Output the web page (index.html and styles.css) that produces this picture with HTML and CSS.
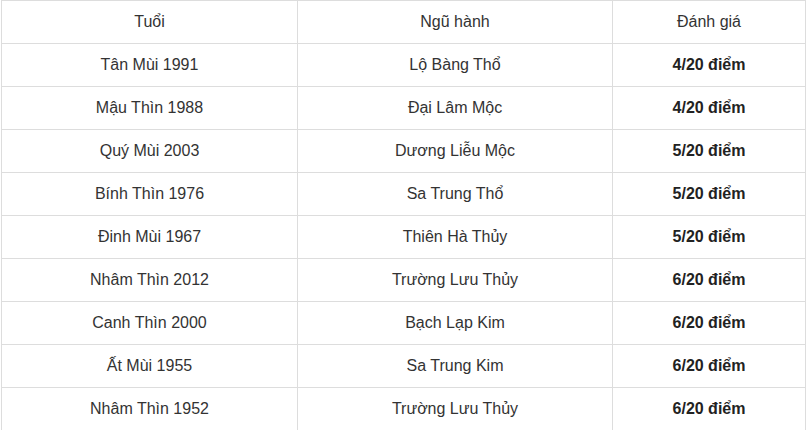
FILE: index.html
```html
<!DOCTYPE html>
<html lang="vi">
<head>
<meta charset="utf-8">
<link rel="stylesheet" href="styles.css">
</head>
<body>
<table class="tbl">
  <colgroup>
    <col class="c1">
    <col class="c2">
    <col class="c3">
  </colgroup>
  <tr><td>Tuổi</td><td>Ngũ hành</td><td>Đánh giá</td></tr>
  <tr><td>Tân Mùi 1991</td><td>Lộ Bàng Thổ</td><td><b>4/20 điểm</b></td></tr>
  <tr><td>Mậu Thìn 1988</td><td>Đại Lâm Mộc</td><td><b>4/20 điểm</b></td></tr>
  <tr><td>Quý Mùi 2003</td><td>Dương Liễu Mộc</td><td><b>5/20 điểm</b></td></tr>
  <tr><td>Bính Thìn 1976</td><td>Sa Trung Thổ</td><td><b>5/20 điểm</b></td></tr>
  <tr><td>Đinh Mùi 1967</td><td>Thiên Hà Thủy</td><td><b>5/20 điểm</b></td></tr>
  <tr><td>Nhâm Thìn 2012</td><td>Trường Lưu Thủy</td><td><b>6/20 điểm</b></td></tr>
  <tr><td>Canh Thìn 2000</td><td>Bạch Lạp Kim</td><td><b>6/20 điểm</b></td></tr>
  <tr><td>Ất Mùi 1955</td><td>Sa Trung Kim</td><td><b>6/20 điểm</b></td></tr>
  <tr><td>Nhâm Thìn 1952</td><td>Trường Lưu Thủy</td><td><b>6/20 điểm</b></td></tr>
</table>
</body>
</html>
```
FILE: styles.css
```css
html, body {
  margin: 0;
  padding: 0;
  background: #fff;
}
body {
  padding-left: 1px;
  font-family: "Liberation Sans", Arial, sans-serif;
  font-size: 16px;
  color: #333;
}
.tbl {
  border-collapse: collapse;
  table-layout: fixed;
  width: 804px;
}
.c1 { width: 296px; }
.c2 { width: 315px; }
.c3 { width: 193px; }
.tbl td {
  border: 1px solid #ddd;
  height: 43px;
  padding: 0 8px;
  text-align: center;
  vertical-align: middle;
  line-height: 20px;
  box-sizing: border-box;
}
.tbl b {
  font-weight: bold;
  color: #222;
}
```
